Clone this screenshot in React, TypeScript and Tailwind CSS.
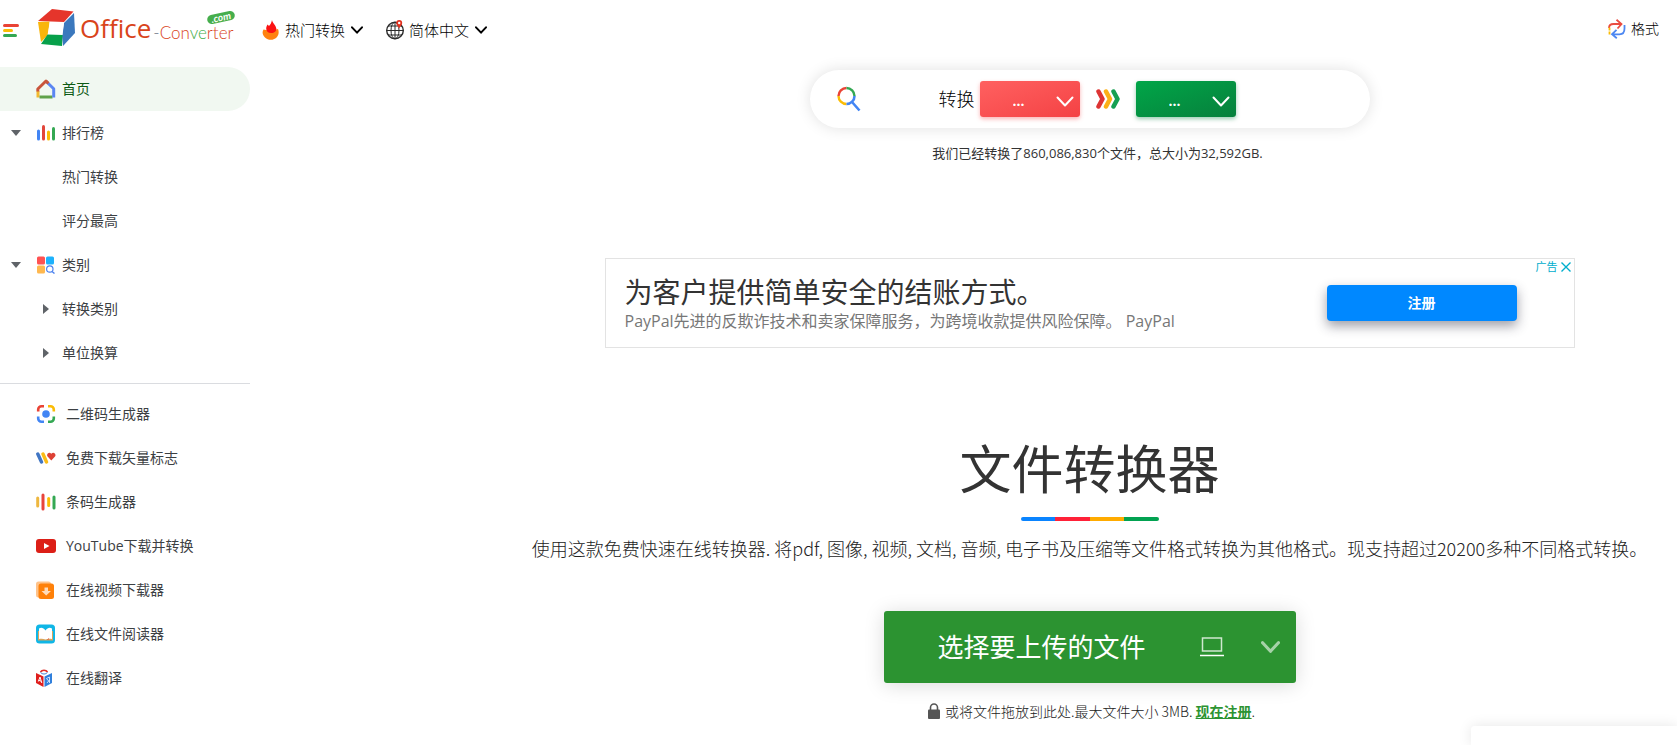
import type { ReactNode } from "react"

const HomeIcon = () => (
  <svg width="20" height="20" viewBox="0 0 20 20" fill="none" strokeWidth="3">
    <path d="M2 12v6.500" stroke="#f1b92f" />
    <path d="M3.500 18h13" stroke="#5fa24a" />
    <path d="M10 2.200l7.700 7.600v8.700" stroke="#5b86f2" strokeLinejoin="round" />
    <path d="M1.800 12.500V10L10 2l2.400 2.400" stroke="#c9553b" strokeLinejoin="round" />
  </svg>
)

const ChartIcon = () => (
  <svg width="20" height="18" viewBox="0 0 20 18" fill="none" strokeWidth="3" strokeLinecap="round">
    <path d="M2.500 7v8" stroke="#4285f4" />
    <path d="M7.500 2.500v12.500" stroke="#e2463b" />
    <path d="M12.500 8v7" stroke="#fbbc05" />
    <path d="M17.500 4.500v10.500" stroke="#34a853" />
  </svg>
)

const CategoryIcon = () => (
  <svg width="20" height="18" viewBox="0 0 20 18">
    <rect x="1" y="0.500" width="8" height="8" rx="1.500" fill="#ff5252" />
    <rect x="10" y="0.500" width="8" height="8" rx="1.500" fill="#1eb2fc" />
    <rect x="1" y="9.500" width="8" height="8" rx="1.500" fill="#ffb84f" />
    <circle cx="13.800" cy="13" r="3.200" fill="none" stroke="#4a80ee" strokeWidth="1.200" />
    <path d="M16 15.500l2.500 2" stroke="#4a80ee" strokeWidth="1.400" />
  </svg>
)

const LensIcon = () => (
  <svg width="20" height="20" viewBox="0 0 20 20" fill="none" strokeWidth="2.600">
    <path d="M2.200 7.500V5.500a3.300 3.300 0 0 1 3.300-3.300h2.500" stroke="#e94335" />
    <path d="M12 2.200h2.500a3.300 3.300 0 0 1 3.300 3.300v2" stroke="#fbbc05" />
    <path d="M2.200 12.500v2a3.300 3.300 0 0 0 3.300 3.300h2.500" stroke="#4285f4" />
    <path d="M12 17.800h2.500a3.300 3.300 0 0 0 3.300-3.300v-2" stroke="#34a853" />
    <circle cx="10" cy="10" r="3.800" fill="#4285f4" />
  </svg>
)

const VectorIcon = () => (
  <svg width="20" height="12" viewBox="0 0 20 12">
    <path d="M1.800 2l3.700 8" stroke="#4176c4" strokeWidth="3.400" strokeLinecap="round" />
    <path d="M7 2l3.500 8" stroke="#fbbc17" strokeWidth="3.400" strokeLinecap="round" />
    <path d="M15.300 8.500l-3.700-3.900C9.900 2.500 13-.800 15.300 1.800 17.600-.800 20.700 2.500 19 4.600z" fill="#dd4135" />
  </svg>
)

const BarcodeIcon = () => (
  <svg width="20" height="18" viewBox="0 0 20 18" fill="none" strokeWidth="3" strokeLinecap="round">
    <path d="M1.700 5v8" stroke="#eeb73f" />
    <path d="M7 2v14" stroke="#e8453c" />
    <path d="M12.700 5.500v7" stroke="#fbbc05" />
    <path d="M18 4v11" stroke="#34a853" />
  </svg>
)

const YoutubeIcon = () => (
  <svg width="20" height="14" viewBox="0 0 20 14">
    <rect width="20" height="14" rx="3" fill="#dc1f17" />
    <path d="M8 4l5.500 3L8 10z" fill="#fff" />
  </svg>
)

const VideoDownloadIcon = () => (
  <svg width="20" height="18" viewBox="0 0 20 18">
    <rect x="0" y="0.500" width="15" height="16" rx="2.500" fill="#ffc38a" />
    <rect x="2.500" y="2.500" width="15.500" height="15.500" rx="2.500" fill="#ff8109" />
    <path d="M8.500 6.500h3.500v3.500h3l-4.800 4.500L5.500 10h3z" fill="#ffdcba" />
  </svg>
)

const ReaderIcon = () => (
  <svg width="20" height="20" viewBox="0 0 20 20">
    <rect x="0" y="0.500" width="19" height="19" rx="3.500" fill="#10b6e6" />
    <path d="M2 7v9.500h15V7z" fill="#d9a55b" />
    <path d="M9.500 6.500C7.500 3.500 5 3 3 4.500v10.500c2.500-.500 4.500-.300 6.500.500 2-.800 4-1 6.500-.500V4.500c-2-1.500-4.500-1-6.500 2z" fill="#fff" />
    <path d="M11.500 15.500l1.500-.800" stroke="#e25241" strokeWidth="1" />
  </svg>
)

const TranslateIcon = () => (
  <svg width="20" height="18" viewBox="0 0 20 18">
    <path d="M4.500 3C6 .500 10 .500 11.500 3" fill="none" stroke="#df2d26" strokeWidth="1.500" />
    <path d="M4.500 3.500C6.500 5.500 9.500 5.500 11.500 3.500" fill="none" stroke="#3b7fd4" strokeWidth="1" />
    <path d="M0 4l7.500 3.500V18L0 14z" fill="#df1f1d" />
    <path d="M16 4L8.500 7.500V18l7.500-4z" fill="#3180dc" />
    <path d="M2.300 12.500L4 8l1.800 6M2.800 11.300l2.500 1" stroke="#fff" strokeWidth="1" fill="none" />
    <path d="M13.500 8l-3 1.500 3 3.500M13.500 8v6M11 14l2.500-3" stroke="#d9e8fb" strokeWidth="0.900" fill="none" />
  </svg>
)

const LogoMark = () => (
  <svg width="38" height="40" viewBox="0 0 38 40">
    <path d="M14 1l21.500 2.500L26 14 0 13z" fill="#e5352b" />
    <path d="M0 14l11.500-.500L10 27 3 34z" fill="#f9b50b" />
    <path d="M36 5l1 20-12 13-1-10 2-13z" fill="#3b78bd" />
    <path d="M12 14l14 .500L24.500 27H9.500z" fill="#fff" />
    <path d="M9.500 26.500l15 .500-.500 11L3 36z" fill="#07a04a" />
  </svg>
)

const FireIcon = () => (
  <svg width="18" height="20" viewBox="0 0 18 20">
    <path d="M1.500 9.500C0 12 .300 15 3 17.500c3.400 3.300 9 3 12-.500 2-2.500 2-5.500 1-8L9 11z" fill="#ff820f" />
    <path d="M10 0c.300 3 3.800 5 4.300 8.500.500 2.500-2 4.500-5.200 4.500S4.200 11 4.200 8.500c0-2 .800-3 1.400-4L7 6C8.500 4.500 9.500 2.500 10 0z" fill="#fb1212" />
  </svg>
)

const GlobeIcon = () => (
  <svg width="18" height="20" viewBox="0 0 18 20" fill="none" stroke="#2b2b2b" strokeWidth="1">
    <circle cx="9" cy="10.500" r="8.300" strokeWidth="1.400" />
    <ellipse cx="9" cy="10.500" rx="4" ry="8.300" />
    <path d="M9 2v17M.700 10.500h16.600M2 6h14M2 15h14" />
    <path d="M13.200 0a3 3 0 0 1 3 3c0 2-2 3.500-3 5.500-1-2-3-3.500-3-5.500a3 3 0 0 1 3-3z" fill="#e2311f" stroke="none" />
    <circle cx="13.200" cy="3" r="1.200" fill="#fff" stroke="none" />
  </svg>
)

const SwapIcon = () => (
  <svg width="20" height="20" viewBox="0 0 20 20" fill="none" strokeWidth="1.800">
    <path d="M2 9C2 6.500 3.500 5 6.500 5H14M9.500.800L14.500 5l-4 4.500" stroke="#ea4c40" />
    <path d="M2.500 8.500v7" stroke="#fbbc05" strokeDasharray="3 1" />
    <path d="M17.500 6v3.500c0 4-1.500 5.800-5 5.800H6M9.500 10.800L5 15.300l4.800 4" stroke="#4d88f2" />
  </svg>
)

const Chevron = ({ className, stroke = 2 }: { className: string; stroke?: number }) => (
  <svg className={className} viewBox="0 0 18 11" fill="none" stroke="currentColor" strokeWidth={stroke}>
    <path d="M1.500 1.500l7.500 8 7.500-8" strokeLinecap="round" strokeLinejoin="round" />
  </svg>
)

const SearchIcon = () => (
  <svg width="24" height="26" viewBox="0 0 24 26" fill="none" strokeWidth="2.400">
    <path d="M1.500 10A8 8 0 0 1 9.500 2" stroke="#ea4335" />
    <path d="M9.500 2a8 8 0 0 1 8 8" stroke="#34a853" />
    <path d="M1.500 10a8 8 0 0 0 8 8" stroke="#fbbc05" />
    <path d="M17.500 10a8 8 0 0 1-8 8M15 16l7.500 8.500" stroke="#4285f4" strokeWidth="2.600" />
  </svg>
)

const ArrowsIcon = () => (
  <svg width="24" height="20" viewBox="0 0 24 20" fill="none" strokeWidth="4.500" strokeLinecap="round" strokeLinejoin="round">
    <path d="M17.500 2.500l4 7.500-4 7.500" stroke="#16a052" />
    <path d="M10 2.500l4 7.500-4 7.500" stroke="#fcb017" />
    <path d="M2.500 2.500l4 7.500-4 7.500" stroke="#dd3434" />
  </svg>
)

const menu: { label: string; icon?: ReactNode; caret?: "down" | "right"; active?: boolean }[] = [
  { label: "首页", icon: <HomeIcon />, active: true },
  { label: "排行榜", icon: <ChartIcon />, caret: "down" },
  { label: "热门转换" },
  { label: "评分最高" },
  { label: "类别", icon: <CategoryIcon />, caret: "down" },
  { label: "转换类别", caret: "right" },
  { label: "单位换算", caret: "right" },
]

const tools = [
  { label: "二维码生成器", icon: <LensIcon /> },
  { label: "免费下载矢量标志", icon: <VectorIcon /> },
  { label: "条码生成器", icon: <BarcodeIcon /> },
  { label: "YouTube下载并转换", icon: <YoutubeIcon /> },
  { label: "在线视频下载器", icon: <VideoDownloadIcon /> },
  { label: "在线文件阅读器", icon: <ReaderIcon /> },
  { label: "在线翻译", icon: <TranslateIcon /> },
]

const Header = () => (
  <header className="flex h-[60px] items-center pr-[18px]">
    <button aria-label="Menu" className="flex w-[38px] flex-col gap-[2px] pl-[3px]">
      <span className="h-[3px] w-4 rounded-full bg-[#e94335]" />
      <span className="h-[3px] w-[10px] rounded-full bg-[#fbbc05]" />
      <span className="h-[3px] w-[14px] rounded-full bg-[#34a853]" />
    </button>
    <a href="#" className="relative flex h-[44px] w-[224px] items-start text-[#d9441b]">
      <LogoMark />
      <span className="ml-1 text-[26px] leading-[40px]">Office</span>
      <span className="ml-[2px] mt-[15px] font-[Lato] text-[17px] font-light leading-[20px]">
        <span className="text-gray-500">-</span>Con<span className="text-[#3fae49]">ve</span>rter
      </span>
      <span className="absolute right-[27px] top-[5px] -rotate-12 rounded-full bg-[#46ae4c] px-1 font-[Lato] text-[10px] font-bold italic leading-[9px] text-white">
        .com
      </span>
    </a>
    <nav className="flex gap-[23px] text-[15px] font-light leading-[20px] text-black">
      <button className="flex items-center">
        <FireIcon />
        <span className="ml-[5px] mr-[6px]">热门转换</span>
        <Chevron className="h-[8px] w-3" stroke={3} />
      </button>
      <button className="flex items-center">
        <GlobeIcon />
        <span className="ml-[5px] mr-[6px]">简体中文</span>
        <Chevron className="h-[8px] w-3" stroke={3} />
      </button>
    </nav>
    <a href="#" className="mb-[2px] ml-auto flex items-center gap-1 text-sm font-light text-black">
      <SwapIcon />
      格式
    </a>
  </header>
)

const Sidebar = () => (
  <aside className="w-[250px] shrink-0 pt-[7px] text-sm text-[#3c4043]">
    <ul>
      {menu.map((item) => (
        <li key={item.label}>
          <a
            href="#"
            className={
              item.active
                ? "flex h-11 items-center rounded-r-full bg-[#f1f8f1] text-[#0d5a14]"
                : "flex h-11 items-center"
            }
          >
            <span className="flex w-9 justify-center pr-1">
              {item.caret === "down" && (
                <span className="border-x-[5px] border-t-[6px] border-x-transparent border-t-[#5f6368]" />
              )}
            </span>
            <span className="flex w-[26px] items-center">
              {item.icon}
              {item.caret === "right" && (
                <span className="ml-[7px] border-y-[5px] border-l-[6px] border-y-transparent border-l-[#5f6368]" />
              )}
            </span>
            {item.label}
          </a>
        </li>
      ))}
    </ul>
    <ul className="mt-2 border-t border-[#dadce0] pt-2">
      {tools.map((tool) => (
        <li key={tool.label}>
          <a href="#" className="flex h-11 items-center gap-[10px] pl-9">
            {tool.icon}
            {tool.label}
          </a>
        </li>
      ))}
    </ul>
  </aside>
)

const FormatSelect = ({ label, className }: { label: string; className: string }) => (
  <span className="relative flex text-white">
    <select
      aria-label={label}
      className={`h-9 w-[100px] appearance-none rounded-[3px] bg-gradient-to-br pl-[33px] pt-1 text-sm font-bold ${className}`}
    >
      <option>...</option>
    </select>
    <Chevron className="pointer-events-none absolute right-[6px] top-[15px] h-[11px] w-[18px]" />
  </span>
)

const SearchBar = () => (
  <div className="flex h-[58px] w-[560px] items-center rounded-full bg-white pl-[27px] shadow-[0_0_15px_rgba(0,0,0,0.12)]">
    <button aria-label="搜索">
      <SearchIcon />
    </button>
    <span className="ml-[78px] mr-[5px] text-lg font-light text-black">转换</span>
    <FormatSelect label="源格式" className="from-[#ff6060] to-[#f44144] shadow-[0_2px_4px_rgba(244,65,68,0.4)]" />
    <span className="mx-4">
      <ArrowsIcon />
    </span>
    <FormatSelect label="目标格式" className="from-[#00a648] to-[#06803c] shadow-[0_2px_4px_rgba(0,128,60,0.4)]" />
  </div>
)

const AdBanner = () => (
  <div className="relative mt-[95px] flex h-[90px] w-[970px] items-center border border-[#e3e3e3] pl-[19px]">
    <div className="pt-[2px]">
      <div className="text-[28px] leading-[34px] text-[#333]">为客户提供简单安全的结账方式。</div>
      <div className="text-base leading-[24px] text-[#777]">
        PayPal先进的反欺诈技术和卖家保障服务，为跨境收款提供风险保障。 PayPal
      </div>
    </div>
    <button className="ml-auto mr-[57px] h-9 w-[190px] rounded bg-[#0088ff] text-sm font-bold text-white shadow-[0_5px_12px_rgba(40,40,60,0.45)]">
      注册
    </button>
    <div className="absolute right-[3px] top-[2px] flex items-center gap-[3px] text-[11px] leading-[12px] text-[#00aecd]">
      广告
      <svg width="10" height="10" viewBox="0 0 10 10" stroke="currentColor" strokeWidth="1.400">
        <path d="M.500.500l9 9M9.500.500l-9 9" />
      </svg>
    </div>
  </div>
)

const Uploader = () => (
  <>
    <button className="mt-[49px] flex h-[72px] w-[412px] items-center rounded-[3px] bg-[#2c9331] pl-[54px] pr-[16px] text-[26px] text-white shadow-[0_2px_20px_rgba(0,0,0,0.15)]">
      选择要上传的文件
      <svg className="ml-auto mr-[37px]" width="24" height="20" viewBox="0 0 24 20" fill="none" stroke="#cfe8d0" strokeWidth="1.500">
        <path d="M2.500 1h19v13h-19z" />
        <path d="M0 18.500h24" stroke="#fff" />
      </svg>
      <Chevron className="h-[12px] w-[19px] text-[#a6d2a8]" stroke={3} />
    </button>
    <p className="mt-[18px] flex items-center pl-1 font-['Noto_Sans_CJK_SC',sans-serif] text-sm font-light leading-[20px] text-[#222]">
      <svg className="mr-[5px]" width="12" height="16" viewBox="0 0 12 16">
        <path d="M2.500 7V4.500a3.500 3.500 0 0 1 7 0V7" fill="none" stroke="#555" strokeWidth="1.600" />
        <rect y="6.500" width="12" height="9.500" rx="1" fill="#555" />
      </svg>
      <span>
        或将文件拖放到此处.最大文件大小 3MB.{" "}
        <a href="#" className="font-bold text-[#2c9331] underline">
          现在注册
        </a>
        .
      </span>
    </p>
  </>
)

export default function App() {
  return (
    <div className="bg-white font-['Open_Sans','Noto_Sans_CJK_SC',sans-serif]">
      <Header />
      <div className="flex">
        <Sidebar />
        <main className="flex flex-1 flex-col items-center pl-[252px] pt-[10px]">
          <SearchBar />
          <p className="mt-[15px] pl-4 text-[13px] leading-[20px] text-[#333]">
            我们已经转换了860,086,830个文件，总大小为32,592GB.
          </p>
          <AdBanner />
          <h1 className="mt-[85px] text-[52px] leading-[72px] text-[#333]">文件转换器</h1>
          <div className="mt-3 flex h-1 w-[138px] overflow-hidden rounded-full">
            <span className="flex-1 bg-[#0a84ff]" />
            <span className="flex-1 bg-[#ff2138]" />
            <span className="flex-1 bg-[#ffab00]" />
            <span className="flex-1 bg-[#02a251]" />
          </div>
          <p className="mt-[13px] font-['Noto_Sans_CJK_SC',sans-serif] text-lg font-light text-[#222]">
            使用这款免费快速在线转换器. 将pdf, 图像, 视频, 文档, 音频, 电子书及压缩等文件格式转换为其他格式。现支持超过20200多种不同格式转换。
          </p>
          <Uploader />
        </main>
      </div>
      <div className="fixed bottom-0 right-0 h-[19px] w-[206px] rounded-tl bg-white shadow-[0_0_14px_rgba(0,0,0,0.1)]" />
    </div>
  )
}
